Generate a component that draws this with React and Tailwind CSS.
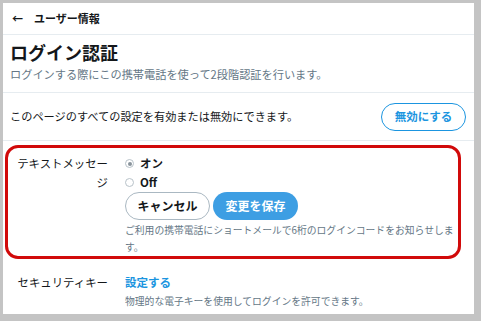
import React from 'react';

const font = { fontFamily: '"Noto Sans CJK JP", "Noto Sans", sans-serif' };

function Radio({ checked, label }) {
  return (
    <label className="flex items-center gap-[6px] leading-[19px]">
      <span className="flex h-[9px] w-[9px] items-center justify-center rounded-full border border-[#b8c2c9] bg-white">
        {checked && <span className="h-[4px] w-[4px] rounded-full bg-[#8a949c]" />}
      </span>
      <span className="text-[11.5px] font-bold text-[#14171a]">{label}</span>
    </label>
  );
}

export default function App() {
  return (
    <div className="h-[321px] w-[481px] overflow-hidden bg-[#c4c4c4] pl-[3px] pt-[3px]" style={font}>
      <div className="flex h-[311px] w-[471px] flex-col bg-white">
        {/* header */}
        <div className="flex h-[32px] shrink-0 items-center gap-[11px] border-b border-[#e6ecf0] pl-[9px]">
          <span className="text-[11px] font-bold text-[#14171a]">←</span>
          <span className="text-[11px] font-bold text-[#14171a]">ユーザー情報</span>
        </div>

        {/* title */}
        <div className="border-b border-[#e6ecf0] pb-[10px] pl-[7px] pt-[5px]">
          <h1 className="text-[18px] font-bold leading-[24px] text-[#14171a]">ログイン認証</h1>
          <p className="mt-[2px] text-[11.2px] leading-[16px] text-[#657786]">
            ログインする際にこの携帯電話を使って2段階認証を行います。
          </p>
        </div>

        {/* toggle all */}
        <div className="flex h-[48px] items-center justify-between border-b border-[#e6ecf0] pl-[7px] pr-[8px]">
          <span className="text-[11.2px] text-[#14171a]">このページのすべての設定を有効または無効にできます。</span>
          <button className="h-[28px] w-[85px] rounded-full border border-[#1b95e0] text-[11.5px] font-bold text-[#1b95e0]">
            無効にする
          </button>
        </div>

        {/* text message (highlighted) */}
        <div className="ml-[2px] mr-[13px] mt-[4px] flex gap-[17px] rounded-[13px] border-[3px] border-[#d10a0a] pl-[8px] pt-[6px]">
          <div className="w-[92px] shrink-0 text-right text-[11.4px] leading-[19px] text-[#14171a]">
            テキストメッセージ
          </div>
          <div className="flex min-w-0 flex-1 flex-col">
            <Radio checked label="オン" />
            <Radio label="Off" />
            <div className="flex gap-[3px]">
              <button className="h-[28px] w-[85px] rounded-full border border-[#aab8c2] bg-white text-[12px] font-bold text-[#14171a]">
                キャンセル
              </button>
              <button className="h-[28px] w-[85px] rounded-full bg-[#3d9ee3] text-[12px] font-bold text-white">
                変更を保存
              </button>
            </div>
            <p className="mt-[2px] text-[9.8px] leading-[17px] text-[#657786]">
              ご利用の携帯電話にショートメールで6桁のログインコードをお知らせします。
            </p>
          </div>
        </div>

        {/* security key */}
        <div className="mt-[14px] flex gap-[17px] pl-[13px]">
          <div className="w-[92px] shrink-0 text-right text-[11.4px] leading-[19px] text-[#14171a]">
            セキュリティキー
          </div>
          <div className="flex flex-col">
            <a className="text-[11.5px] font-bold leading-[19px] text-[#1b95e0]">設定する</a>
            <p className="mt-[1px] text-[9.8px] leading-[17px] text-[#657786]">
              物理的な電子キーを使用してログインを許可できます。
            </p>
          </div>
        </div>
      </div>
    </div>
  );
}
